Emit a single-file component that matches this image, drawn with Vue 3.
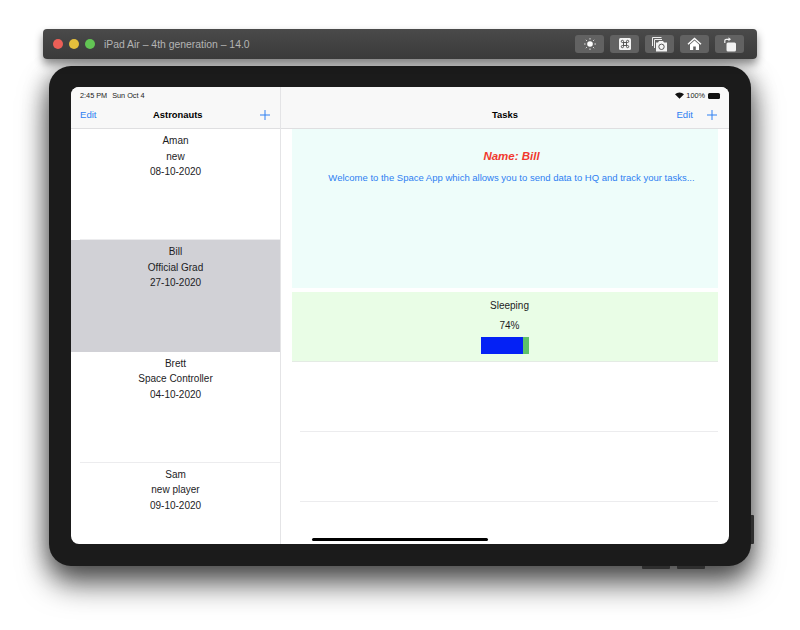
<script setup>
const astronauts = [
  { name: 'Aman', role: 'new', date: '08-10-2020' },
  { name: 'Bill', role: 'Official Grad', date: '27-10-2020', selected: true },
  { name: 'Brett', role: 'Space Controller', date: '04-10-2020' },
  { name: 'Sam', role: 'new player', date: '09-10-2020' }
];

const progress = 74;
const barFill = 87;
</script>

<template>
  <div class="page">
    <header class="toolbar">
      <div class="lights">
        <span class="light red"></span>
        <span class="light yellow"></span>
        <span class="light green"></span>
      </div>
      <span class="device-name">iPad Air – 4th generation – 14.0</span>
      <div class="tools">
        <button class="tool">
          <svg width="14" height="14" viewBox="0 0 14 14">
            <circle cx="7" cy="7" r="2.8" fill="#fff" />
            <path d="M7 1v1.6M7 11.4V13M1 7h1.6M11.4 7H13M2.8 2.8l1.1 1.1M10.1 10.1l1.1 1.1M2.8 11.2l1.1-1.1M10.1 3.9l1.1-1.1" stroke="#ddd" stroke-width="1" />
          </svg>
        </button>
        <button class="tool">
          <svg width="14" height="14" viewBox="0 0 14 14">
            <rect x="1" y="1" width="12" height="12" rx="1.5" fill="#f2f2f2" />
            <path d="M5.5 5.5h3v3h-3zM5.5 5.5H4.4a1.1 1.1 0 1 1 1.1-1.1zM8.5 5.5V4.4a1.1 1.1 0 1 1 1.1 1.1zM8.5 8.5h1.1a1.1 1.1 0 1 1-1.1 1.1zM5.5 8.5v1.1a1.1 1.1 0 1 1-1.1-1.1z" fill="none" stroke="#444" stroke-width="0.9" />
          </svg>
        </button>
        <button class="tool">
          <svg width="17" height="16" viewBox="0 0 17 16">
            <path d="M1.5 10V1.5h9" fill="none" stroke="#eee" stroke-width="1" />
            <path d="M3.5 12V3.5H11" fill="none" stroke="#eee" stroke-width="1" />
            <path d="M5 6.500h2l1-1.500h4l1 1.500h3v9H5z" fill="#f2f2f2" />
            <circle cx="10.500" cy="10.800" r="2.700" fill="none" stroke="#555" stroke-width="1" />
          </svg>
        </button>
        <button class="tool">
          <svg width="15" height="14" viewBox="0 0 15 14">
            <path d="M1 7.200 7.500 1.500 14 7.200" fill="none" stroke="#fff" stroke-width="1.500" />
            <path d="M3 7.500 7.500 3.600 12 7.500V13H8.800V9.500H6.200V13H3z" fill="#fff" />
          </svg>
        </button>
        <button class="tool">
          <svg width="14" height="15" viewBox="0 0 14 15">
            <rect x="3.500" y="5.500" width="9.500" height="9" rx="1.500" fill="#f2f2f2" />
            <path d="M1.800 6V3.800A1.500 1.500 0 0 1 3.300 2.300H6" fill="none" stroke="#f2f2f2" stroke-width="1.200" />
            <path d="M5.500 0.300 8 2.300 5.500 4.300z" fill="#f2f2f2" />
          </svg>
        </button>
      </div>
    </header>

    <div class="device">
      <span class="side-button"></span>
      <span class="volume-button one"></span>
      <span class="volume-button two"></span>
      <div class="screen">
        <aside class="master">
          <div class="master-bar">
            <div class="status-bar">
              <span>2:45 PM</span>
              <span>Sun Oct 4</span>
            </div>
            <div class="nav">
              <span class="nav-link">Edit</span>
              <span class="nav-title">Astronauts</span>
              <svg class="plus" width="12" height="12" viewBox="0 0 12 12">
                <path d="M6 1v10M1 6h10" stroke="#2f80f2" stroke-width="1" />
              </svg>
            </div>
          </div>
          <ul class="astronauts">
            <li
              v-for="astronaut in astronauts"
              :key="astronaut.name"
              class="astronaut"
              :class="{ selected: astronaut.selected }"
            >
              <span>{{ astronaut.name }}</span>
              <span>{{ astronaut.role }}</span>
              <span>{{ astronaut.date }}</span>
            </li>
          </ul>
        </aside>

        <main class="detail">
          <div class="detail-bar">
            <div class="status-bar status-right">
              <svg width="9" height="7" viewBox="0 0 9 7">
                <path d="M4.500 6.800 0 2.300a6.400 6.400 0 0 1 9 0z" fill="#111" />
              </svg>
              <span>100%</span>
              <span class="battery"></span>
            </div>
            <div class="nav">
              <span class="nav-spacer"></span>
              <span class="nav-title">Tasks</span>
              <div class="nav-actions">
                <span class="nav-link">Edit</span>
                <svg class="plus" width="12" height="12" viewBox="0 0 12 12">
                  <path d="M6 1v10M1 6h10" stroke="#2f80f2" stroke-width="1" />
                </svg>
              </div>
            </div>
          </div>

          <div class="tasks">
            <section class="welcome">
              <h2 class="welcome-name">Name: Bill</h2>
              <p class="welcome-text">Welcome to the Space App which allows you to send data to HQ and track your tasks...</p>
            </section>
            <section class="task">
              <span class="task-label">Sleeping</span>
              <span class="task-label">{{ progress }}%</span>
              <div class="bar">
                <div class="bar-fill" :style="{ width: barFill + '%' }"></div>
              </div>
            </section>
            <div class="empty-row"></div>
            <div class="empty-row"></div>
          </div>
          <span class="home-indicator"></span>
        </main>
      </div>
    </div>
  </div>
</template>

<style>
html,
body {
  margin: 0;
  background: #fff;
}
</style>

<style scoped>
.page {
  width: 800px;
  height: 630px;
  box-sizing: border-box;
  padding-top: 29px;
  overflow: hidden;
  font-family: "Liberation Sans", Arial, sans-serif;
  background: #fff;
}

.toolbar {
  height: 30px;
  margin: 0 43px;
  padding: 0 13px 0 10px;
  display: flex;
  align-items: center;
  border-radius: 4px;
  background: linear-gradient(#4a4a4a, #3a3a3a);
  box-shadow: 0 5px 9px rgba(0, 0, 0, 0.45);
  position: relative;
  z-index: 1;
}

.lights {
  display: flex;
  gap: 6px;
  margin-right: 9px;
}

.light {
  width: 10px;
  height: 10px;
  border-radius: 50%;
}

.red { background: #ec5f57; }
.yellow { background: #e5bf3c; }
.green { background: #62c554; }

.device-name {
  font-size: 10.4px;
  color: #b4b4b4;
}

.tools {
  margin-left: auto;
  display: flex;
  gap: 6px;
}

.tool {
  width: 29px;
  height: 18px;
  padding: 0;
  border: 0;
  border-radius: 3px;
  background: #626262;
  display: flex;
  align-items: center;
  justify-content: center;
}

.device {
  position: relative;
  height: 500px;
  margin: 7px 49px 0;
  box-sizing: border-box;
  padding: 21px 22px 22px;
  border-radius: 22px;
  background: #1b1b1b;
  box-shadow: 0 18px 30px rgba(0, 0, 0, 0.6), 0 4px 24px rgba(0, 0, 0, 0.4);
}

.side-button {
  position: absolute;
  right: -3px;
  top: 449px;
  width: 3px;
  height: 29px;
  background: #2e2e2e;
  border-radius: 0 1px 1px 0;
}

.volume-button {
  position: absolute;
  bottom: -3px;
  width: 28px;
  height: 3px;
  background: #2e2e2e;
  border-radius: 0 0 1px 1px;
}

.volume-button.one { left: 593px; }
.volume-button.two { left: 628px; }

.screen {
  height: 457px;
  display: flex;
  border-radius: 8px;
  overflow: hidden;
  background: #fff;
  font-size: 10px;
  color: #1c1c1e;
}

.master {
  width: 209px;
  flex: none;
  border-right: 1px solid #e4e4e6;
  display: flex;
  flex-direction: column;
}

.master-bar,
.detail-bar {
  height: 41px;
  flex: none;
  background: #f8f8f8;
  border-bottom: 1px solid #dfdfe1;
}

.status-bar {
  height: 13px;
  padding: 2px 9px 0;
  display: flex;
  align-items: center;
  gap: 5px;
  font-size: 7.3px;
  color: #222;
}

.status-right {
  justify-content: flex-end;
  gap: 2px;
  padding-right: 9px;
}

.battery {
  width: 12px;
  height: 6px;
  border-radius: 1.5px;
  background: #111;
  margin-left: 1px;
}

.nav {
  height: 25px;
  padding: 0 9px;
  display: flex;
  align-items: center;
  justify-content: space-between;
}

.detail-bar .nav {
  padding-right: 11px;
}

.nav-link {
  font-size: 9.6px;
  color: #2f80f2;
}

.nav-title {
  font-size: 9.4px;
  font-weight: 700;
  color: #000;
}

.plus {
  display: block;
}

.nav-spacer {
  width: 52px;
}

.nav-actions {
  width: 50px;
  display: flex;
  align-items: center;
  justify-content: flex-end;
  gap: 13px;
  flex: none;
}

.nav-actions .nav-link {
  white-space: nowrap;
}

.astronauts {
  list-style: none;
  margin: 0;
  padding: 0;
  flex: 1;
  overflow: hidden;
}

.astronaut {
  height: 111.3px;
  box-sizing: border-box;
  padding-top: 6px;
  display: flex;
  flex-direction: column;
  align-items: center;
  gap: 3px;
  line-height: 12.5px;
  position: relative;
}

.astronaut::after {
  content: '';
  position: absolute;
  left: 9px;
  right: 0;
  bottom: 0;
  height: 1px;
  background: #ececee;
}

.astronaut.selected {
  background: #d1d1d6;
}

.astronaut.selected::after {
  display: none;
}

.detail {
  flex: 1;
  min-width: 0;
  position: relative;
  display: flex;
  flex-direction: column;
}

.tasks {
  padding-left: 11px;
  padding-right: 11px;
}

.welcome {
  height: 159px;
  box-sizing: border-box;
  padding: 20px 0 0 13px;
  text-align: center;
  background: #eefdfa;
}

.welcome-name {
  margin: 0;
  font-size: 11.5px;
  line-height: 14px;
  font-style: italic;
  font-weight: 700;
  color: #f1392e;
}

.welcome-text {
  margin: 8px 0 0;
  font-size: 9.5px;
  line-height: 13px;
  color: #2f80f2;
}

.task {
  height: 70px;
  margin-top: 4px;
  box-sizing: border-box;
  padding-top: 8px;
  display: flex;
  flex-direction: column;
  align-items: center;
  gap: 7px;
  line-height: 12.5px;
  background: #e9fde6;
  border-bottom: 1px solid #e4ebe4;
}

.task-label {
  padding-left: 9px;
}

.bar {
  width: 48px;
  height: 17px;
  margin-top: -2px;
  background: #5ec26a;
}

.bar-fill {
  height: 100%;
  background: #0421f5;
}

.empty-row {
  height: 70px;
  margin-left: 8px;
  box-sizing: border-box;
  border-bottom: 1px solid #ececee;
}

.home-indicator {
  position: absolute;
  left: 31px;
  bottom: 3px;
  width: 176px;
  height: 3px;
  border-radius: 2px;
  background: #000;
}
</style>
